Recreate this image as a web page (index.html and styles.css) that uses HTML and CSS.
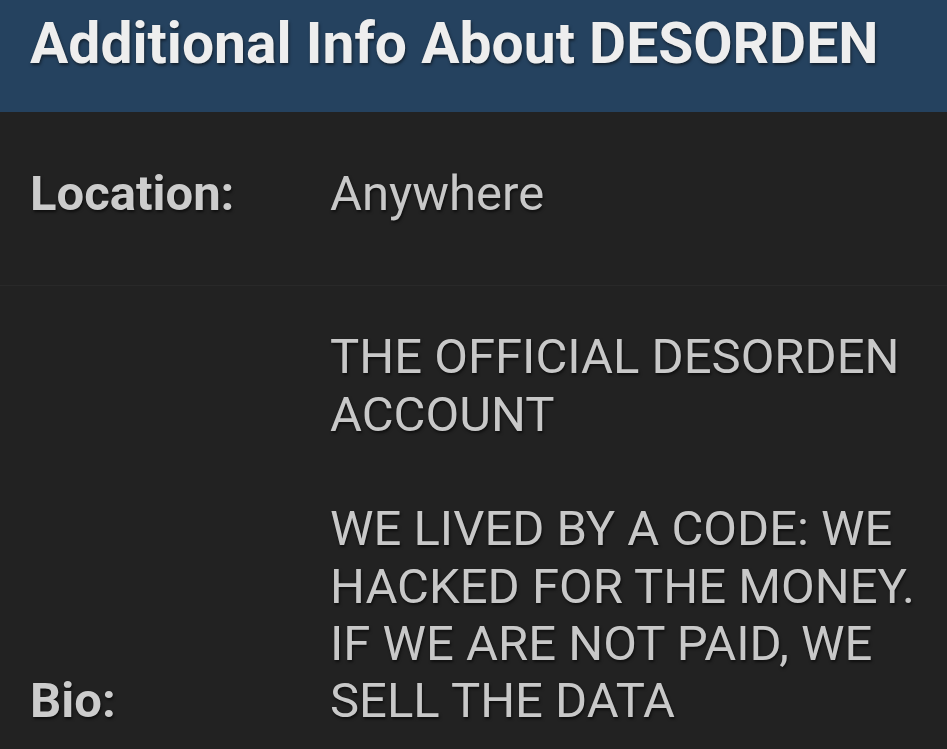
FILE: index.html
```html
<!DOCTYPE html>
<html lang="en">
<head>
    <meta charset="UTF-8">
    <title>Additional Info About DESORDEN</title>
    <link rel="stylesheet" href="styles.css">
</head>
<body>
    <div class="panel">
        <div class="panel-header">
            <h2>Additional Info About DESORDEN</h2>
        </div>
        <div class="info-row location-row">
            <div class="info-label">Location:</div>
            <div class="info-value">Anywhere</div>
        </div>
        <div class="info-row bio-row">
            <div class="info-label">Bio:</div>
            <div class="info-value">THE OFFICIAL DESORDEN ACCOUNT<br><br>WE LIVED BY A CODE: WE HACKED FOR THE MONEY. IF WE ARE NOT PAID, WE SELL THE DATA</div>
        </div>
    </div>
</body>
</html>
```

FILE: styles.css
```css
body {
    margin: 0;
    background: #222222;
    font-family: Roboto, "Liberation Sans", sans-serif;
    overflow: hidden;
}

.panel {
    width: 947px;
    min-height: 749px;
    background: #222222;
}

.panel-header {
    background: #25425f;
    height: 112px;
    padding: 10px 30px 0;
    box-sizing: border-box;
}

.panel-header h2 {
    margin: 0;
    font-size: 57px;
    font-weight: 700;
    line-height: 67px;
    color: #eeeeee;
    text-shadow: 1px 2px 3px rgba(0, 0, 0, 0.5);
}

.info-row {
    display: flex;
    align-items: flex-end;
    padding: 0 20px 0 30px;
}

.location-row {
    padding-top: 53px;
    padding-bottom: 63px;
    border-bottom: 1px solid #292929;
}

.bio-row {
    padding-top: 42px;
}

.info-label {
    width: 300px;
    flex-shrink: 0;
    font-size: 49px;
    font-weight: 700;
    line-height: 57.33px;
    color: #cccccc;
    text-shadow: 1px 2px 3px rgba(0, 0, 0, 0.6);
}

.info-value {
    flex: 1;
    font-size: 49px;
    line-height: 57.33px;
    color: #c8c8c8;
    text-shadow: 1px 2px 3px rgba(0, 0, 0, 0.6);
}
```
